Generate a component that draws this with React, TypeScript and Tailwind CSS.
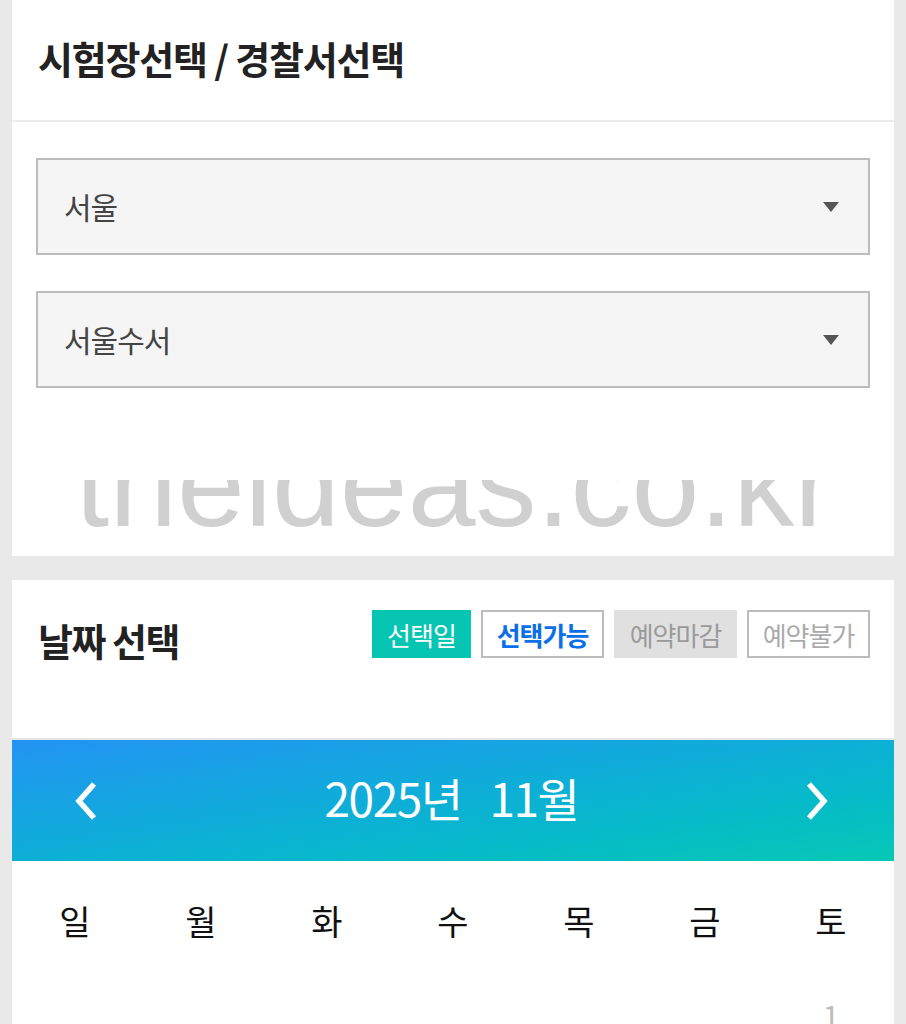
export default function App() {
  const days = ["일", "월", "화", "수", "목", "금", "토"];
  const font = { fontFamily: '"Noto Sans CJK KR", "Noto Sans", sans-serif' };

  return (
    <div className="min-h-screen bg-[#e9e9e9] px-[12px]" style={font}>
      {/* 시험장 / 경찰서 */}
      <section className="bg-white">
        <div className="flex h-[122px] items-center border-b-2 border-[#ececec] px-[26px] pb-[6px]">
          <h2 className="text-[38px] font-bold tracking-[-1.2px] text-[#222]">시험장선택 / 경찰서선택</h2>
        </div>
        <div className="flex flex-col gap-[36px] px-[24px] pt-[36px]">
          {["서울", "서울수서"].map((label) => (
            <div
              key={label}
              className="flex h-[97px] items-center justify-between border-2 border-[#bcbcbc] bg-[#f4f5f4] pl-[26px] pr-[28px]"
            >
              <span className="text-[30px] tracking-[-1px] text-[#444]">{label}</span>
              <svg width="18" height="12" viewBox="0 0 18 12">
                <path d="M1 1h16l-8 10z" fill="#555" />
              </svg>
            </div>
          ))}
        </div>
        <div className="mt-[92px] h-[76px] overflow-hidden">
          <p
            className="mt-[-57px] pl-[4px] text-center text-[122px] leading-none text-[#d0d0d0]"
            style={{ fontFamily: '"Liberation Sans", Arial, sans-serif' }}
          >
            theideas.co.kr
          </p>
        </div>
      </section>

      {/* 날짜 선택 */}
      <section className="mt-[24px] bg-white">
        <div className="flex h-[158px] items-start justify-between pl-[26px] pr-[24px] pt-[30px]">
          <h2 className="mt-[6px] text-[38px] font-bold leading-[48px] tracking-[-1.5px] text-[#222]">날짜 선택</h2>
          <div className="flex gap-[10px] text-[26px] tracking-[-1px]">
            <span className="flex h-[48px] w-[99px] items-center justify-center bg-[#06c5b3] text-white">선택일</span>
            <span className="flex h-[48px] w-[123px] items-center justify-center border-2 border-[#bcbcbc] font-bold text-[#0a6fe8]">
              선택가능
            </span>
            <span className="flex h-[48px] w-[123px] items-center justify-center bg-[#e0e0e0] text-[#9a9a9a]">예약마감</span>
            <span className="flex h-[48px] w-[123px] items-center justify-center border-2 border-[#bcbcbc] text-[#aaa]">
              예약불가
            </span>
          </div>
        </div>
        <div className="border-t-2 border-[#e6e6e6]" />
        <div className="flex h-[121px] items-center justify-between bg-linear-to-br from-[#2393f3] to-[#07c8b5] pl-[61px] pr-[64px] text-white">
          <svg width="26" height="40" viewBox="0 0 26 40">
            <path d="M21 3L6 20l15 17" fill="none" stroke="white" strokeWidth="5.5" />
          </svg>
          <div className="flex items-baseline pb-[6px] text-[46px] tracking-[-1.5px]">
            <span>2025년</span>
            <span className="ml-[28px]">11월</span>
          </div>
          <svg width="26" height="40" viewBox="0 0 26 40">
            <path d="M5 3l15 17L5 37" fill="none" stroke="white" strokeWidth="5.5" />
          </svg>
        </div>
        <div className="grid grid-cols-7 pt-[38px]">
          {days.map((d) => (
            <span key={d} className="text-center text-[34px] leading-[44px] text-[#111]">
              {d}
            </span>
          ))}
        </div>
        <div className="grid grid-cols-7 pt-[52px]">
          {[0, 1, 2, 3, 4, 5].map((i) => (
            <span key={i} />
          ))}
          <span className="text-center text-[30px] leading-[40px] text-[#bbb]">1</span>
        </div>
      </section>
    </div>
  );
}
